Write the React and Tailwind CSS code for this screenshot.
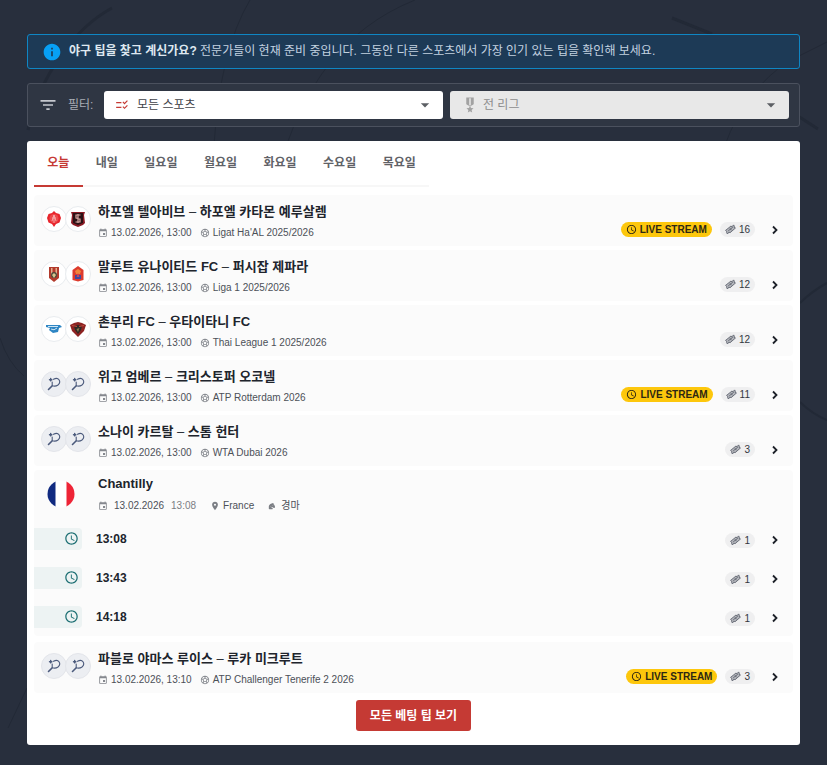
import React, { useState } from 'react';
import {
  MdInfo,
  MdFilterList,
  MdChecklistRtl,
  MdMilitaryTech,
  MdArrowDropDown,
  MdEvent,
  MdSportsSoccer,
  MdAccessTime,
  MdPlace,
} from 'react-icons/md';
import { FaHorseHead } from 'react-icons/fa6';

const DAYS = ['오늘', '내일', '일요일', '월요일', '화요일', '수요일', '목요일'];

const MATCHES = [
  { id: 1, home: '하포엘 텔아비브', away: '하포엘 카타몬 예루살렘', date: '13.02.2026, 13:00', league: "Ligat Ha'AL 2025/2026", tips: 16, live: true, logos: ['telaviv', 'katamon'] },
  { id: 2, home: '말루트 유나이티드 FC', away: '퍼시잡 제파라', date: '13.02.2026, 13:00', league: 'Liga 1 2025/2026', tips: 12, logos: ['malut', 'persijap'] },
  { id: 3, home: '촌부리 FC', away: '우타이타니 FC', date: '13.02.2026, 13:00', league: 'Thai League 1 2025/2026', tips: 12, logos: ['chonburi', 'uthai'] },
  { id: 4, home: '위고 엄베르', away: '크리스토퍼 오코넬', date: '13.02.2026, 13:00', league: 'ATP Rotterdam 2026', tips: 11, live: true },
  { id: 5, home: '소나이 카르탈', away: '스톰 헌터', date: '13.02.2026, 13:00', league: 'WTA Dubai 2026', tips: 3 },
];

const LAST_MATCH = { id: 6, home: '파블로 야마스 루이스', away: '루카 미크루트', date: '13.02.2026, 13:10', league: 'ATP Challenger Tenerife 2 2026', tips: 3, live: true };

const RACES = ['13:08', '13:43', '14:18'];

const CRESTS = {
  telaviv: (
    <>
      <path d="M8 0l2 2 3.500 1L15 7l-1.500 4.500L10 13l-2 3-2-3-3.500-1.500L1 7l1.500-4L6 2z" fill="#e8252c" />
      <circle cx="8" cy="7.5" r="4.5" fill="#ee4a4d" />
      <path d="M6 10l2-6 2 6M6 7h4M8 4v8" stroke="#f9b4b4" strokeWidth="0.8" fill="none" />
    </>
  ),
  katamon: (
    <>
      <path d="M1 1h14l-1 3 1 8-2 2-5 2-5-2-2-2 1-8z" fill="#8a1a24" />
      <path d="M3 2h10v10l-5 2-5-2z" fill="#2b1216" />
      <path d="M10.500 4H6v3l4 1v3H5.500M8 3v9" stroke="#d9a7a2" strokeWidth="1.2" fill="none" />
    </>
  ),
  malut: (
    <>
      <path d="M3 1h10v11l-5 4-5-4z" fill="#b23a2c" />
      <path d="M5 2h1.500v7H5zM9.500 2H11v7H9.500z" fill="#e5b08f" />
      <circle cx="8" cy="9" r="3" fill="#4d4a3c" />
      <path d="M6 9l2-2 2 2-2 3z" fill="#d8c48c" />
    </>
  ),
  persijap: (
    <>
      <path d="M2.500 4L8 0l5.500 4v10L8 15.500 2.500 14z" fill="#dd3b2e" />
      <path d="M5 5l3-2 3 2-1 3H6z" fill="#f0863a" />
      <path d="M5 9h6v4H5z" fill="#3c4aa0" />
      <path d="M8 7l1.500 4h-3z" fill="#c9475a" />
    </>
  ),
  chonburi: (
    <>
      <path d="M0 4h14l2 2-3 1-1 4-5 1-4-3 1-2-4-1z" fill="#2e86c4" />
      <path d="M2 5.500h10M5 8q3 2 6-1" stroke="#cfe6f5" strokeWidth="1" fill="none" />
    </>
  ),
  uthai: (
    <>
      <path d="M0 4l4-2 4-1 4 1 4 2-2 6-6 6-6-6z" fill="#8d2322" />
      <path d="M4 5l4-1 4 1-1 4-3 4-3-4z" fill="#2e2a26" />
      <path d="M2 4.500l5 1M14 4.500l-5 1" stroke="#c4493b" strokeWidth="1" />
      <path d="M6.500 8l3-1-1.500 4z" fill="#8b7a4d" />
    </>
  ),
};

const Crest = ({ name }) => (
  <span className="flex size-[26px] items-center justify-center rounded-full border border-[#e9ecef] bg-white">
    <svg viewBox="0 0 16 16" className="size-4" aria-hidden="true">
      {CRESTS[name]}
    </svg>
  </span>
);

const Racket = () => (
  <span className="flex size-[26px] items-center justify-center rounded-full border border-[#e3e5ea] bg-[#eceef2]">
    <svg viewBox="0 0 14 14" className="size-3.5" fill="none" stroke="#4b5a7c" strokeLinecap="round" aria-hidden="true">
      <path d="M6.500 2.300C8.500 1.200 11 1.300 12 2.800c1.100 1.700.5 4-1 5.200-1.500 1.100-3.700 1.300-5.800.8V5" strokeWidth="1.1" />
      <path d="M5 9l-3.500 3.500" strokeWidth="1.6" />
      <path d="M2.500 2.700h2.400M3.700 1.500v2.400" strokeWidth="1.4" />
    </svg>
  </span>
);

const TicketIcon = () => (
  <svg viewBox="0 0 12 12" className="size-[11px]" fill="none" stroke="#555a66" strokeWidth="0.9" aria-hidden="true">
    <path d="M.6 7L6.500 2.200l1.200.8 1.600-2 .9 1.300-.3 1.200 1.500.9L5.500 9.500l-1.200-.7-1.600 2.100-.9-1.300.3-1.200z" fill="#b4b6bc" />
    <path d="M3.500 7.500l5-4M5.500 4.800l1.500 2" />
  </svg>
);

const TipCount = ({ value }) => (
  <span className="flex h-[15px] items-center gap-[3px] rounded-full bg-[#efeff0] px-[5px] text-[10px] text-[#33373f]">
    <TicketIcon />
    {value}
  </span>
);

const Chevron = () => (
  <svg viewBox="0 0 16 16" className="ml-3 size-4 shrink-0" fill="none" stroke="#1d2129" strokeWidth="1.8" aria-hidden="true">
    <path d="M6 4.500L9.500 8 6 11.500" />
  </svg>
);

const MatchRow = ({ match }) => (
  <a href="#tips" className="flex h-[51px] rounded-sm bg-[#fbfbfb] pr-[10px] pl-[7px]">
    <div className="mt-[11px] flex shrink-0">
      {match.logos ? <Crest name={match.logos[0]} /> : <Racket />}
      <span className="-ml-0.5">{match.logos ? <Crest name={match.logos[1]} /> : <Racket />}</span>
    </div>

    <div className="ml-[7px] flex-1 pt-2">
      <h3 className="text-[13px] leading-[18px] font-bold text-[#20242c]">
        {match.home} <span className="font-normal">–</span> {match.away}
      </h3>
      <div className="mt-[5px] flex items-center text-[10px] leading-[14px] text-[#4c5058]">
        <MdEvent className="size-[10px] text-[#85888e]" />
        <span className="ml-[3px]">{match.date}</span>
        <MdSportsSoccer className="ml-2 size-[10px] text-[#85888e]" />
        <span className="ml-[3px]">{match.league}</span>
      </div>
    </div>

    <div className="mt-[27px] flex h-[15px] items-center">
      {match.live && (
        <span className="mr-2 flex h-[15px] items-center gap-[3px] rounded-full bg-[#fdc70c] px-[5px] text-[10px] font-bold text-[#2d2713]">
          <MdAccessTime className="size-[11px]" />
          LIVE STREAM
        </span>
      )}
      <TipCount value={match.tips} />
      <Chevron />
    </div>
  </a>
);

const RaceCard = () => (
  <section className="mb-0.5 rounded-sm bg-[#fbfbfb]">
    <div className="flex h-[49px] pl-[13px]">
      <svg viewBox="0 0 28 28" className="mt-[10px] size-7 shrink-0" role="img" aria-label="France">
        <clipPath id="flag-round">
          <circle cx="14" cy="14" r="13.5" />
        </clipPath>
        <g clipPath="url(#flag-round)">
          <path d="M0 0h28v28H0z" fill="#fff" />
          <path d="M0 0h8.500v28H0z" fill="#102a80" />
          <path d="M19.500 0H28v28h-8.500z" fill="#ee2436" />
        </g>
      </svg>
      <div className="ml-[23px] pt-[5px]">
        <h3 className="text-[13px] leading-[18px] font-bold text-[#20242c]">Chantilly</h3>
        <div className="mt-1.5 flex items-center text-[10px] leading-[14px] text-[#4c5058]">
          <MdEvent className="size-[10px] text-[#85888e]" />
          <span className="ml-1.5">13.02.2026</span>
          <span className="ml-[7px] text-[#7b7e84]">13:08</span>
          <MdPlace className="ml-3.5 size-[10px] text-[#7b7e84]" />
          <span className="ml-[3px]">France</span>
          <FaHorseHead className="ml-3.5 size-2 text-[#7b7e84]" />
          <span className="ml-[5px]">경마</span>
        </div>
      </div>
    </div>

    {RACES.map((time) => (
      <a key={time} href="#tips" className="flex h-[39px] items-center pr-[10px]">
        <span className="flex h-[22px] w-12 items-center justify-end rounded-r-sm bg-[#edf3f3] pr-[3px]">
          <MdAccessTime className="size-[15px] text-[#1d6f73]" />
        </span>
        <span className="ml-3.5 flex-1 text-[12px] font-bold text-[#20242c]">{time}</span>
        <span className="mt-[3px] flex items-center">
          <TipCount value={1} />
          <Chevron />
        </span>
      </a>
    ))}
  </section>
);

const Backdrop = () => (
  <svg
    className="pointer-events-none absolute inset-0 -z-10 h-full w-full"
    viewBox="0 0 827 765"
    preserveAspectRatio="none"
    fill="none"
    stroke="#222936"
    aria-hidden="true"
  >
    <path d="M112 8C75 28 40 75 28 130" strokeWidth="3" />
    <path d="M415 0C340 30 305 90 285 150M250 0q-30 50-36 145" />
    <path d="M672 18l40 16M750 85l68 44" strokeWidth="3" />
    <path d="M827 42l-28 14M790 60q-45 30-65 85" />
    <path d="M0 338q8 25 24 38M8 728l19-40" />
    <path d="M800 303q12-12 27-20M800 402q12 12 27 18" strokeWidth="2" />
  </svg>
);

const App = () => {
  const [activeDay, setActiveDay] = useState(DAYS[0]);

  return (
    <main className="relative isolate min-h-screen bg-[#282f3d] px-[27px] pt-[34px] pb-5 font-['Liberation_Sans','Noto_Sans_CJK_KR',sans-serif]">
      <Backdrop />

      <div className="flex min-h-[35px] items-center rounded-[3px] border border-[#0f86c4] bg-[#1d3a56] px-3.5">
        <MdInfo className="size-5 shrink-0 text-[#07a0f5]" />
        <p className="ml-[7px] pb-0.5 text-[12px] leading-[18px] text-[#c3d2e0]">
          <strong className="text-[#dfe8f0]">야구 팁을 찾고 계신가요?</strong> 전문가들이 현재 준비 중입니다. 그동안 다른 스포츠에서 가장 인기 있는 팁을 확인해 보세요.
        </p>
      </div>

      <div className="mt-3.5 flex items-center rounded-[3px] border border-[#4b515e] bg-[#2f3643] py-[7px] pr-[10px] pl-[10px] text-[12px]">
        <MdFilterList className="size-5 text-[#c5c8ce]" />
        <span className="ml-[10px] w-9 text-[#a9adb5]">필터:</span>
        <div className="grid flex-1 grid-cols-2 gap-[7px]">
          <div className="relative flex h-7 items-center rounded-[3px] bg-white pl-[11px]">
            <MdChecklistRtl className="size-3.5 text-[#c63a34]" />
            <select aria-label="스포츠" className="h-full flex-1 appearance-none bg-transparent pl-2 text-[#3f4248] outline-none">
              <option>모든 스포츠</option>
            </select>
            <MdArrowDropDown className="pointer-events-none absolute right-2 size-5 text-[#5c5f64]" />
          </div>
          <div className="relative flex h-7 items-center rounded-[3px] bg-[#e8e8e8] pl-[11px]">
            <MdMilitaryTech className="size-[18px] text-[#a2a2a2]" />
            <select aria-label="리그" disabled className="h-full flex-1 appearance-none bg-transparent pl-1 text-[#8d8d8d] outline-none">
              <option>전 리그</option>
            </select>
            <MdArrowDropDown className="pointer-events-none absolute right-2 size-5 text-[#5c5f64]" />
          </div>
        </div>
      </div>

      <div className="mt-3.5 rounded-[3px] bg-white px-[7px] pb-3.5">
        <div role="tablist" className="flex h-[46px] w-[395px]">
          {DAYS.map((day) => (
            <button
              key={day}
              type="button"
              role="tab"
              aria-selected={activeDay === day}
              onClick={() => setActiveDay(day)}
              className={`grow cursor-pointer border-b-2 text-[12px] font-bold whitespace-nowrap ${
                activeDay === day ? 'border-[#c63a34] text-[#c63a34]' : 'border-[#f7f7f7] text-[#5f6267]'
              }`}
            >
              {day}
            </button>
          ))}
        </div>

        <div className="mt-2 flex flex-col gap-1">
          {MATCHES.map((match) => (
            <MatchRow key={match.id} match={match} />
          ))}
          <RaceCard />
          <MatchRow match={LAST_MATCH} />
        </div>

        <div className="mt-[7px] flex justify-center">
          <button type="button" className="h-[31px] cursor-pointer rounded-[3px] bg-[#c53a34] px-3.5 text-[12px] font-bold text-white">
            모든 베팅 팁 보기
          </button>
        </div>
      </div>
    </main>
  );
};

export default App;
